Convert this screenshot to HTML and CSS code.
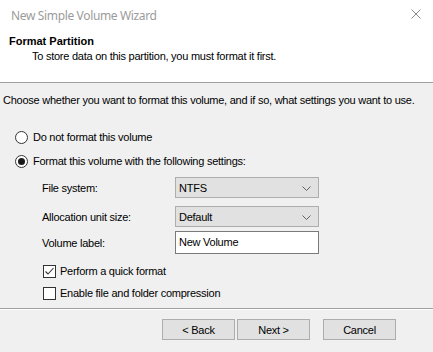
FILE: index.html
```html
<!DOCTYPE html>
<html>
<head>
<meta charset="utf-8">
<link rel="stylesheet" href="styles.css">
</head>
<body>
<div class="window">
  <div class="titlebar">
    <span class="title">New Simple Volume Wizard</span>
    <svg class="close" width="10" height="10" viewBox="0 0 10 10"><path d="M0.5 0.5 L9.5 9.5 M9.5 0.5 L0.5 9.5" stroke="#8a8a8a" stroke-width="1" fill="none"/></svg>
  </div>
  <div class="header">
    <div class="h-title">Format Partition</div>
    <div class="h-sub">To store data on this partition, you must format it first.</div>
  </div>
  <div class="content">
    <div class="intro">Choose whether you want to format this volume, and if so, what settings you want to use.</div>
    <div class="radio-row r1"><span class="radio"></span><span>Do not format this volume</span></div>
    <div class="radio-row r2"><span class="radio checked"><span class="dot"></span></span><span>Format this volume with the following settings:</span></div>
    <div class="settings">
      <div class="field f1"><span class="label">File system:</span><div class="combo"><span>NTFS</span><svg width="9" height="5" viewBox="0 0 9 5"><path d="M0.5 0.5 L4.5 4.5 L8.5 0.5" stroke="#606060" fill="none"/></svg></div></div>
      <div class="field f2"><span class="label">Allocation unit size:</span><div class="combo"><span>Default</span><svg width="9" height="5" viewBox="0 0 9 5"><path d="M0.5 0.5 L4.5 4.5 L8.5 0.5" stroke="#606060" fill="none"/></svg></div></div>
      <div class="field f3"><span class="label">Volume label:</span><div class="textbox">New Volume</div></div>
      <div class="check-row c1"><span class="check"><svg width="11" height="11" viewBox="0 0 11 11"><path d="M1.5 5.5 L4 8 L9.5 2" stroke="#333" stroke-width="1.1" fill="none"/></svg></span><span>Perform a quick format</span></div>
      <div class="check-row c2"><span class="check"></span><span>Enable file and folder compression</span></div>
    </div>
  </div>
  <div class="footer">
    <button class="btn">&lt; Back</button>
    <button class="btn">Next &gt;</button>
    <button class="btn cancel">Cancel</button>
  </div>
</div>
</body>
</html>
```
FILE: styles.css
```css
html, body {
  margin: 0;
  padding: 0;
  background: #f0f0f0;
}
.window {
  width: 433px;
  height: 352px;
  background: #f0f0f0;
  font-family: "Liberation Sans", Arial, sans-serif;
  font-size: 11px;
  letter-spacing: -0.25px;
  color: #000;
  overflow: hidden;
  white-space: nowrap;
}
.titlebar {
  height: 30px;
  background: #fff;
  display: flex;
  align-items: center;
  justify-content: space-between;
  padding: 0 12px 0 11px;
}
.title {
  font-family: "Noto Sans", "Open Sans", sans-serif;
  font-size: 12px;
  letter-spacing: -0.35px;
  color: #9b9b9b;
  margin-top: 1px;
}
.close {
  margin-top: -2px;
}
.header {
  height: 53px;
  background: #fff;
  box-sizing: border-box;
  padding-top: 5px;
  border-bottom: 1px solid #a0a0a0;
}
.h-title {
  font-weight: bold;
  line-height: 13px;
  padding-left: 9px;
  letter-spacing: 0;
}
.h-sub {
  line-height: 13px;
  margin-top: 2px;
  padding-left: 32px;
}
.content {
  height: 226px;
  box-sizing: border-box;
  padding-top: 11px;
  border-bottom: 1px solid #a0a0a0;
  box-shadow: 0 1px 0 #fff;
}
.intro {
  line-height: 13px;
  padding-left: 3px;
}
.radio-row {
  display: flex;
  align-items: center;
  height: 13px;
  line-height: 13px;
  padding-left: 15px;
}
.r1 { margin-top: 24px; }
.r2 { margin-top: 11px; }
.radio {
  width: 11px;
  height: 11px;
  border: 1px solid #333;
  border-radius: 50%;
  background: #fff;
  margin-right: 5px;
  display: flex;
  align-items: center;
  justify-content: center;
}
.dot {
  width: 7px;
  height: 7px;
  border-radius: 50%;
  background: #1a1a1a;
}
.settings {
  padding-left: 42px;
}
.field {
  display: flex;
  align-items: center;
}
.f1 { margin-top: 9px; }
.f2 { margin-top: 8px; }
.f3 { margin-top: 4px; }
.label {
  width: 133px;
}
.combo {
  width: 144px;
  height: 21px;
  box-sizing: border-box;
  background: #e1e1e1;
  border: 1px solid #adadad;
  display: flex;
  align-items: center;
  justify-content: space-between;
  padding: 0 7px 0 3px;
}
.combo svg { margin-top: 1px; }
.textbox {
  width: 144px;
  height: 23px;
  box-sizing: border-box;
  background: #fff;
  border: 1px solid #7a7a7a;
  display: flex;
  align-items: center;
  padding-left: 3px;
  padding-bottom: 2px;
}
.check-row {
  display: flex;
  align-items: center;
  height: 13px;
  line-height: 13px;
  padding-left: 1px;
}
.c1 { margin-top: 11px; }
.c2 { margin-top: 9px; }
.check {
  width: 13px;
  height: 13px;
  box-sizing: border-box;
  border: 1px solid #333;
  background: #fff;
  margin-right: 4px;
  display: flex;
  align-items: center;
  justify-content: center;
}
.footer {
  display: flex;
  padding: 10px 0 0 162px;
  gap: 2px;
}
.btn {
  width: 73px;
  height: 21px;
  box-sizing: border-box;
  background: #e1e1e1;
  border: 1px solid #adadad;
  font-family: "Liberation Sans", Arial, sans-serif;
  font-size: 11px;
  letter-spacing: -0.25px;
  color: #000;
  padding: 0;
  margin: 0;
}
.cancel {
  margin-left: 11px;
}
```
